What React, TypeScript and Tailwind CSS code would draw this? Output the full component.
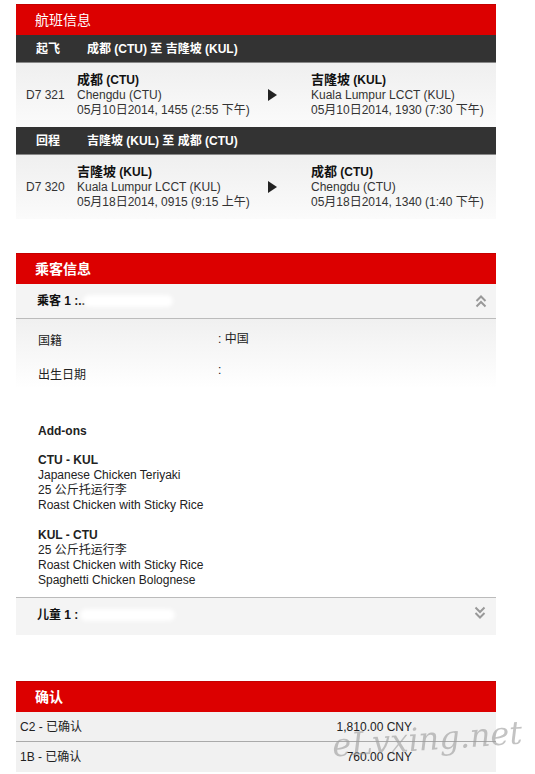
import React from "react"

const font = { fontFamily: '"Liberation Sans", Arial, "Noto Sans CJK SC", sans-serif' }

function RedHeader({ title, bold }: { title: string; bold?: boolean }) {
    return (
        <div className={"h-[31px] bg-[#dc0000] border-t border-[#c40000] flex items-center pl-[19px] text-white text-[14px] " + (bold ? "font-bold" : "font-normal")}>
            {title}
        </div>
    )
}

function DarkBar({ label, route }: { label: string; route: string }) {
    return (
        <div className="h-[28px] bg-[#333333] flex items-center text-white text-[12px] font-bold border-b border-[#888]">
            <span className="w-[71px] pl-[20px]">{label}</span>
            <span>{route}</span>
        </div>
    )
}

function FlightRow(props: { no: string; fromCity: string; fromAirport: string; fromTime: string; toCity: string; toAirport: string; toTime: string }) {
    return (
        <div className="h-[64px] bg-linear-to-b from-[#efefef] to-[#fbfbfb] flex items-center text-[12px] leading-[15px] text-[#333]">
            <div className="w-[61px] pl-[10px]">{props.no}</div>
            <div className="w-[191px]">
                <div><span className="font-bold text-[#111] text-[13px]">{props.fromCity.split(" ")[0]}</span> <span className="font-bold text-[#111]">{props.fromCity.split(" ")[1]}</span></div>
                <div>{props.fromAirport}</div>
                <div>{props.fromTime}</div>
            </div>
            <div className="w-[43px] flex">
                <svg width="9" height="12" viewBox="0 0 9 12"><path d="M0 0 L9 6 L0 12 Z" fill="#222" /></svg>
            </div>
            <div>
                <div><span className="font-bold text-[#111] text-[13px]">{props.toCity.split(" ")[0]}</span> <span className="font-bold text-[#111]">{props.toCity.split(" ")[1]}</span></div>
                <div>{props.toAirport}</div>
                <div>{props.toTime}</div>
            </div>
        </div>
    )
}

function Chevrons({ up }: { up?: boolean }) {
    return (
        <svg width="12" height="14" viewBox="0 0 12 14" className={up ? "" : "rotate-180"}>
            <path d="M1.5 7 L6 2.5 L10.5 7" fill="none" stroke="#999" strokeWidth="2" />
            <path d="M1.5 12.5 L6 8 L10.5 12.5" fill="none" stroke="#999" strokeWidth="2" />
        </svg>
    )
}

export default function App() {
    return (
        <div style={font} className="w-[535px] h-[774px] bg-white relative overflow-hidden">
            <div className="w-[480px] ml-[16px] pt-[4px]">
                <RedHeader title="航班信息" />
                <DarkBar label="起飞" route="成都 (CTU) 至 吉隆坡 (KUL)" />
                <FlightRow no="D7 321" fromCity="成都 (CTU)" fromAirport="Chengdu (CTU)" fromTime="05月10日2014, 1455 (2:55 下午)" toCity="吉隆坡 (KUL)" toAirport="Kuala Lumpur LCCT (KUL)" toTime="05月10日2014, 1930 (7:30 下午)" />
                <DarkBar label="回程" route="吉隆坡 (KUL) 至 成都 (CTU)" />
                <FlightRow no="D7 320" fromCity="吉隆坡 (KUL)" fromAirport="Kuala Lumpur LCCT (KUL)" fromTime="05月18日2014, 0915 (9:15 上午)" toCity="成都 (CTU)" toAirport="Chengdu (CTU)" toTime="05月18日2014, 1340 (1:40 下午)" />

                <div className="mt-[34px]">
                    <RedHeader title="乘客信息" bold />
                    <div className="h-[35px] bg-[#f4f4f4] border-b border-[#bbbbbb] flex items-center justify-between pl-[21px] pr-[9px] text-[12px] font-bold text-[#111]">
                        <div className="flex items-center">
                            <span>乘客 1 :..</span>
                            <span className="inline-block w-[90px] h-[12px] bg-white rounded-full blur-[2px] -ml-[2px]" />
                        </div>
                        <Chevrons up />
                    </div>
                    <div className="bg-linear-to-b from-[#f0f0f0] via-white via-[25%] to-white pl-[22px] text-[12px] leading-[15px] text-[#222] pb-[9px]">
                        <div className="flex pt-[13px] h-[42px]">
                            <span className="w-[180px] pt-[2px]">国籍</span>
                            <span>: 中国</span>
                        </div>
                        <div className="flex pt-[2px] h-[50px]">
                            <span className="w-[180px] pt-[5px]">出生日期</span>
                            <span>:</span>
                        </div>
                        <div className="font-bold pt-[13px]">Add-ons</div>
                        <div className="mt-[14px]">
                            <div className="font-bold">CTU - KUL</div>
                            <div>Japanese Chicken Teriyaki</div>
                            <div>25 公斤托运行李</div>
                            <div>Roast Chicken with Sticky Rice</div>
                        </div>
                        <div className="mt-[15px]">
                            <div className="font-bold">KUL - CTU</div>
                            <div>25 公斤托运行李</div>
                            <div>Roast Chicken with Sticky Rice</div>
                            <div>Spaghetti Chicken Bolognese</div>
                        </div>
                    </div>
                    <div className="h-[38px] bg-[#f4f4f4] border-t border-[#bbbbbb] flex items-start justify-between pt-[8px] pl-[21px] pr-[10px] text-[12px] font-bold text-[#111]">
                        <div className="flex items-center">
                            <span>儿童 1 :</span>
                            <span className="inline-block w-[95px] h-[12px] bg-white rounded-full blur-[2px] ml-[2px]" />
                        </div>
                        <Chevrons />
                    </div>
                </div>

                <div className="mt-[46px]">
                    <RedHeader title="确认" bold />
                    <div className="h-[30px] bg-[#f1f1f1] border-b border-[#aaaaaa] flex items-center text-[12px] text-[#222]">
                        <span className="w-[319px] pl-[4px]">C2 - 已确认</span>
                        <span className="w-[77px] text-right">1,810.00 CNY</span>
                    </div>
                    <div className="h-[30px] bg-[#f1f1f1] flex items-center text-[12px] text-[#222]">
                        <span className="w-[319px] pl-[4px]">1B - 已确认</span>
                        <span className="w-[77px] text-right">760.00 CNY</span>
                    </div>
                </div>
            </div>
            <div className="absolute left-[332px] top-[720px] -rotate-[4deg] text-[32px] leading-[38px] italic text-[#9c9c9c] opacity-60" style={{ fontFamily: '"DejaVu Serif", serif' }}>
                eLvxing.net
            </div>
        </div>
    )
}
